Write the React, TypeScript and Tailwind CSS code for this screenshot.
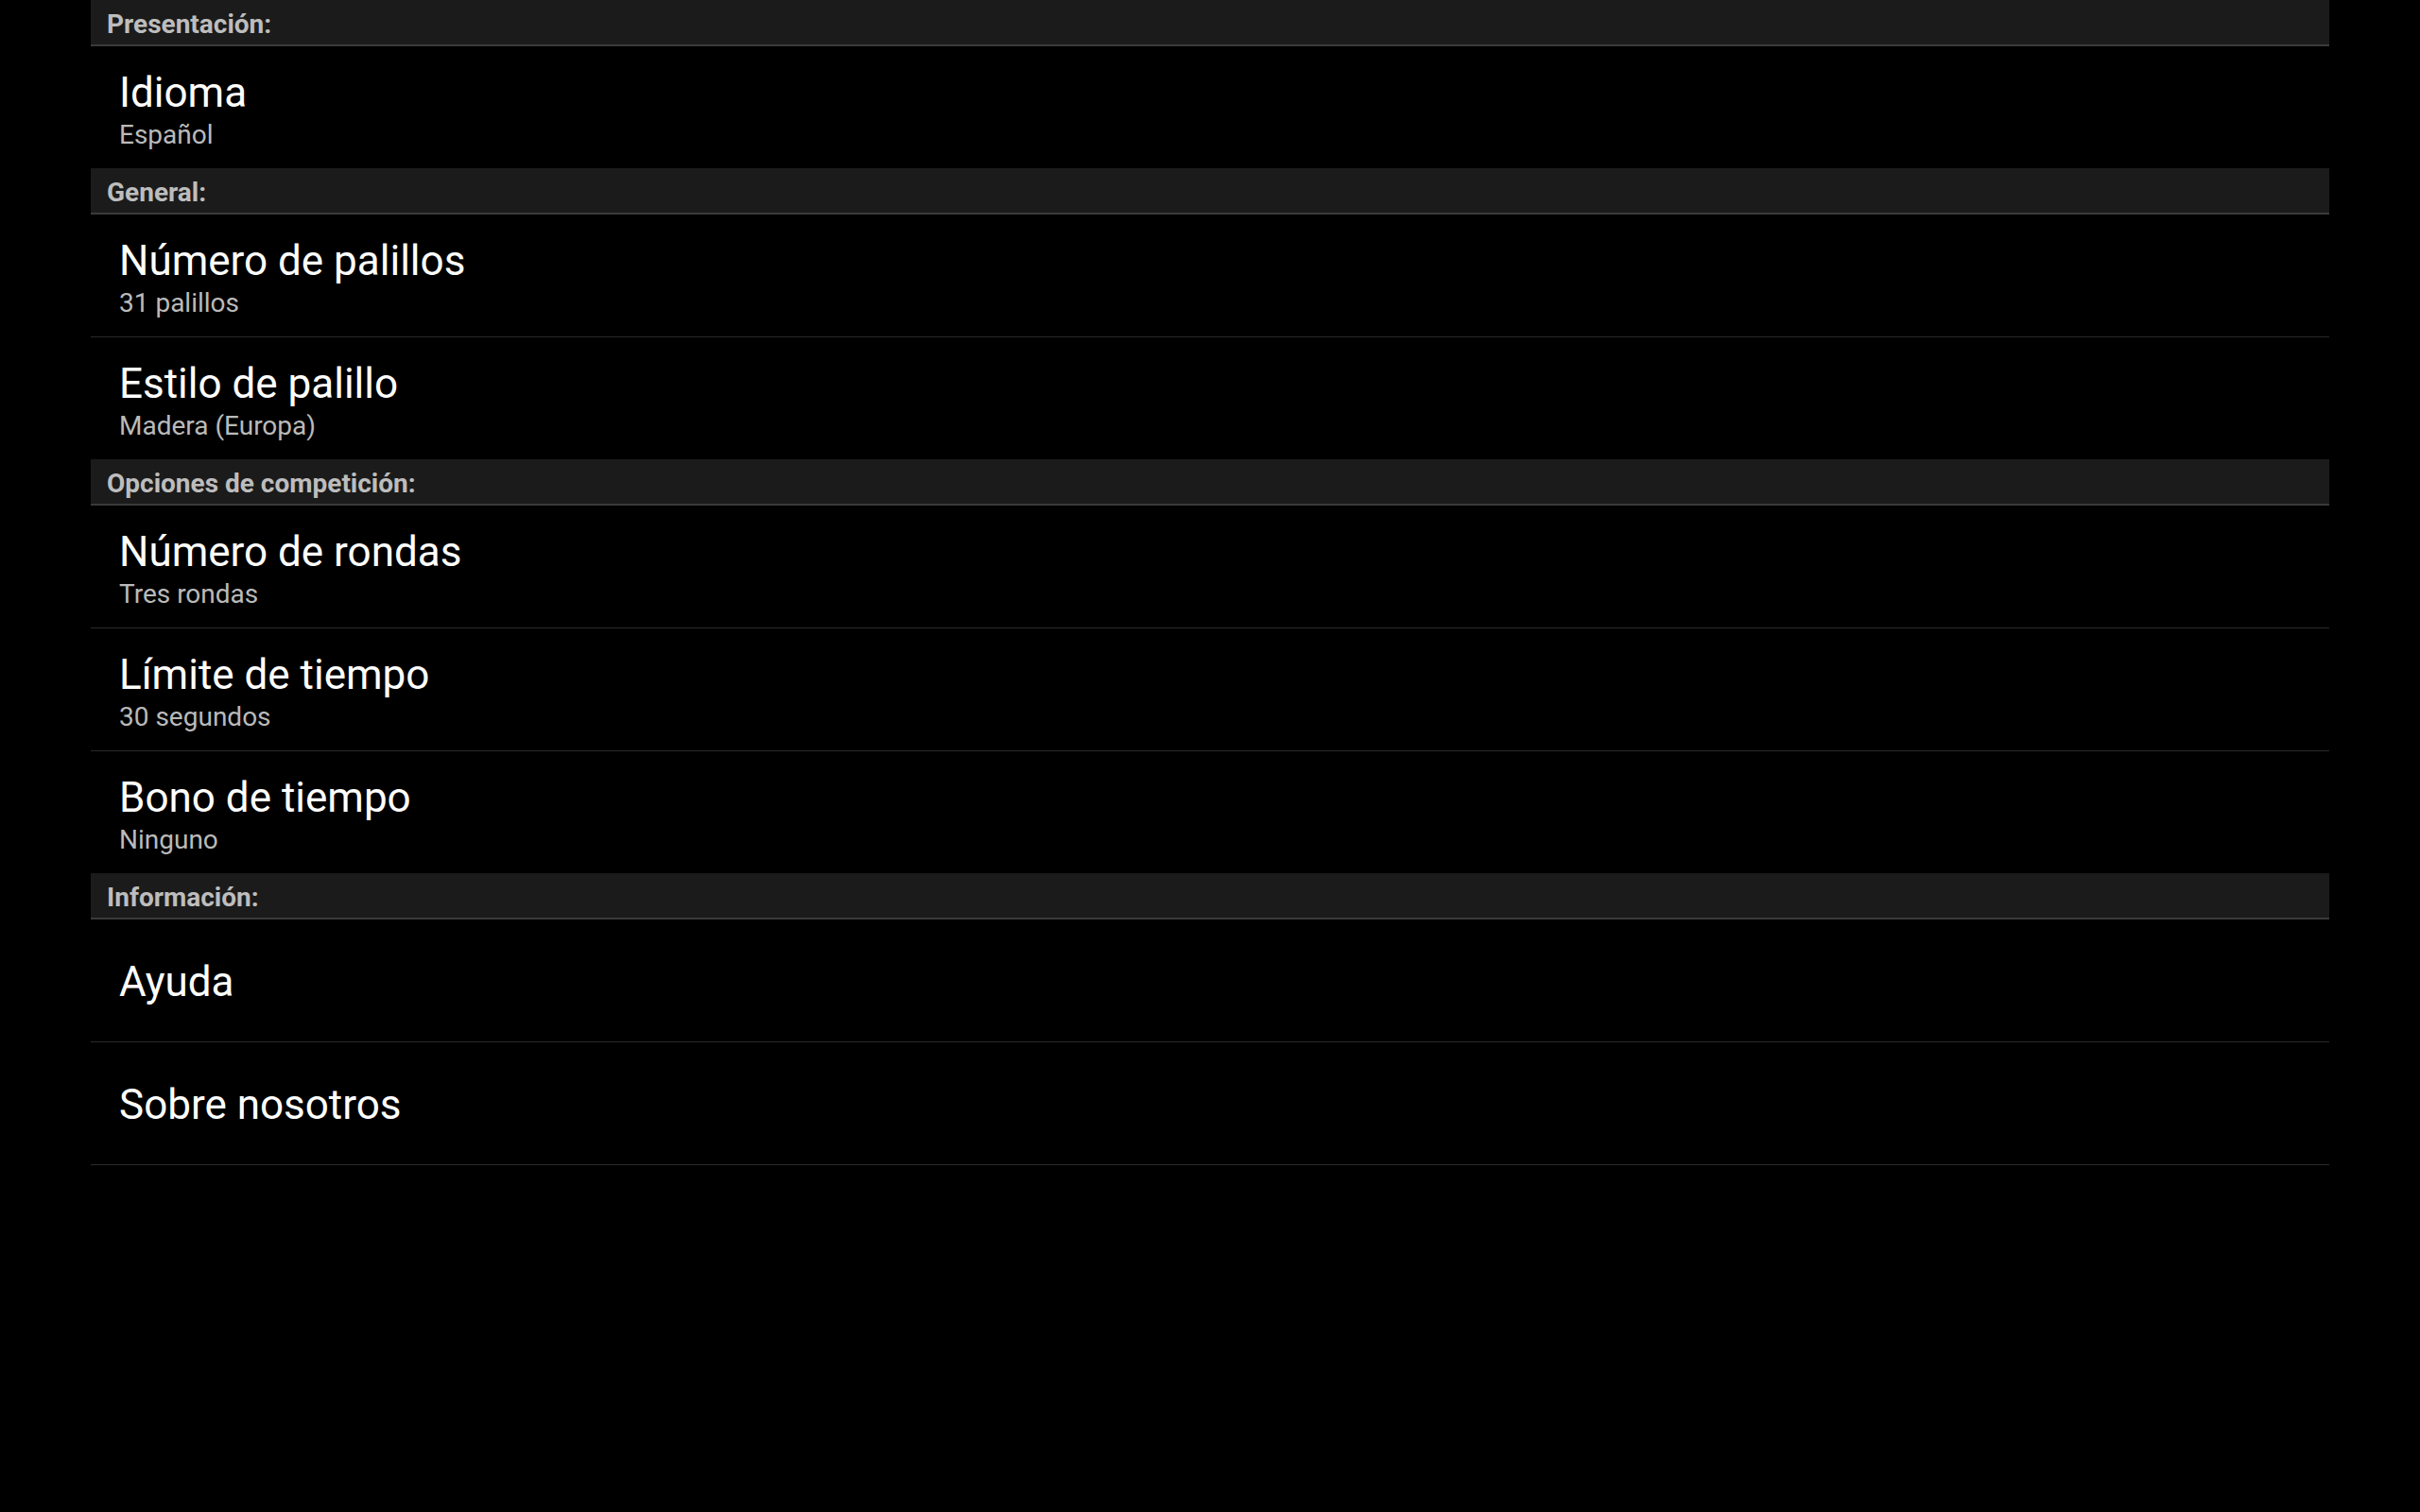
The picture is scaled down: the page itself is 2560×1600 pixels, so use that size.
import React from "react";

type Item = { title: string; subtitle?: string };
type Section = { header: string; items: Item[] };

const sections: Section[] = [
  { header: "Presentación:", items: [{ title: "Idioma", subtitle: "Español" }] },
  {
    header: "General:",
    items: [
      { title: "Número de palillos", subtitle: "31 palillos" },
      { title: "Estilo de palillo", subtitle: "Madera (Europa)" },
    ],
  },
  {
    header: "Opciones de competición:",
    items: [
      { title: "Número de rondas", subtitle: "Tres rondas" },
      { title: "Límite de tiempo", subtitle: "30 segundos" },
      { title: "Bono de tiempo", subtitle: "Ninguno" },
    ],
  },
  {
    header: "Información:",
    items: [{ title: "Ayuda" }, { title: "Sobre nosotros" }],
  },
];

export default function App() {
  return (
    <div
      className="w-full h-[1600px] bg-black overflow-hidden"
      style={{ fontFamily: "Roboto, 'Noto Sans', sans-serif" }}
    >
      <div className="mx-[96px] flex flex-col">
        {sections.map((s, si) => (
          <div key={si} className="flex flex-col">
            <div className="h-[49px] bg-[#1b1b1b] border-b-2 border-[#3a3a3a] pl-[17px] pt-[5px]">
              <span className="text-[28px] leading-[42px] font-bold text-[#bdbdbd]">{s.header}</span>
            </div>
            {s.items.map((it, ii) => {
              const last = ii === s.items.length - 1;
              const divider = !last || si === sections.length - 1;
              return (
                <div
                  key={ii}
                  className={
                    divider
                      ? "h-[130px] border-b border-[#2a2a2a] flex flex-col justify-center pl-[30px] pt-[3px]"
                      : "h-[129px] flex flex-col justify-center pl-[30px] pt-[3px]"
                  }
                >
                  <div className="text-[44px] leading-[52px] text-white">{it.title}</div>
                  {it.subtitle && (
                    <div className="text-[28px] leading-[32px] mt-[3px] text-[#bababa]">{it.subtitle}</div>
                  )}
                </div>
              );
            })}
          </div>
        ))}
      </div>
    </div>
  );
}
